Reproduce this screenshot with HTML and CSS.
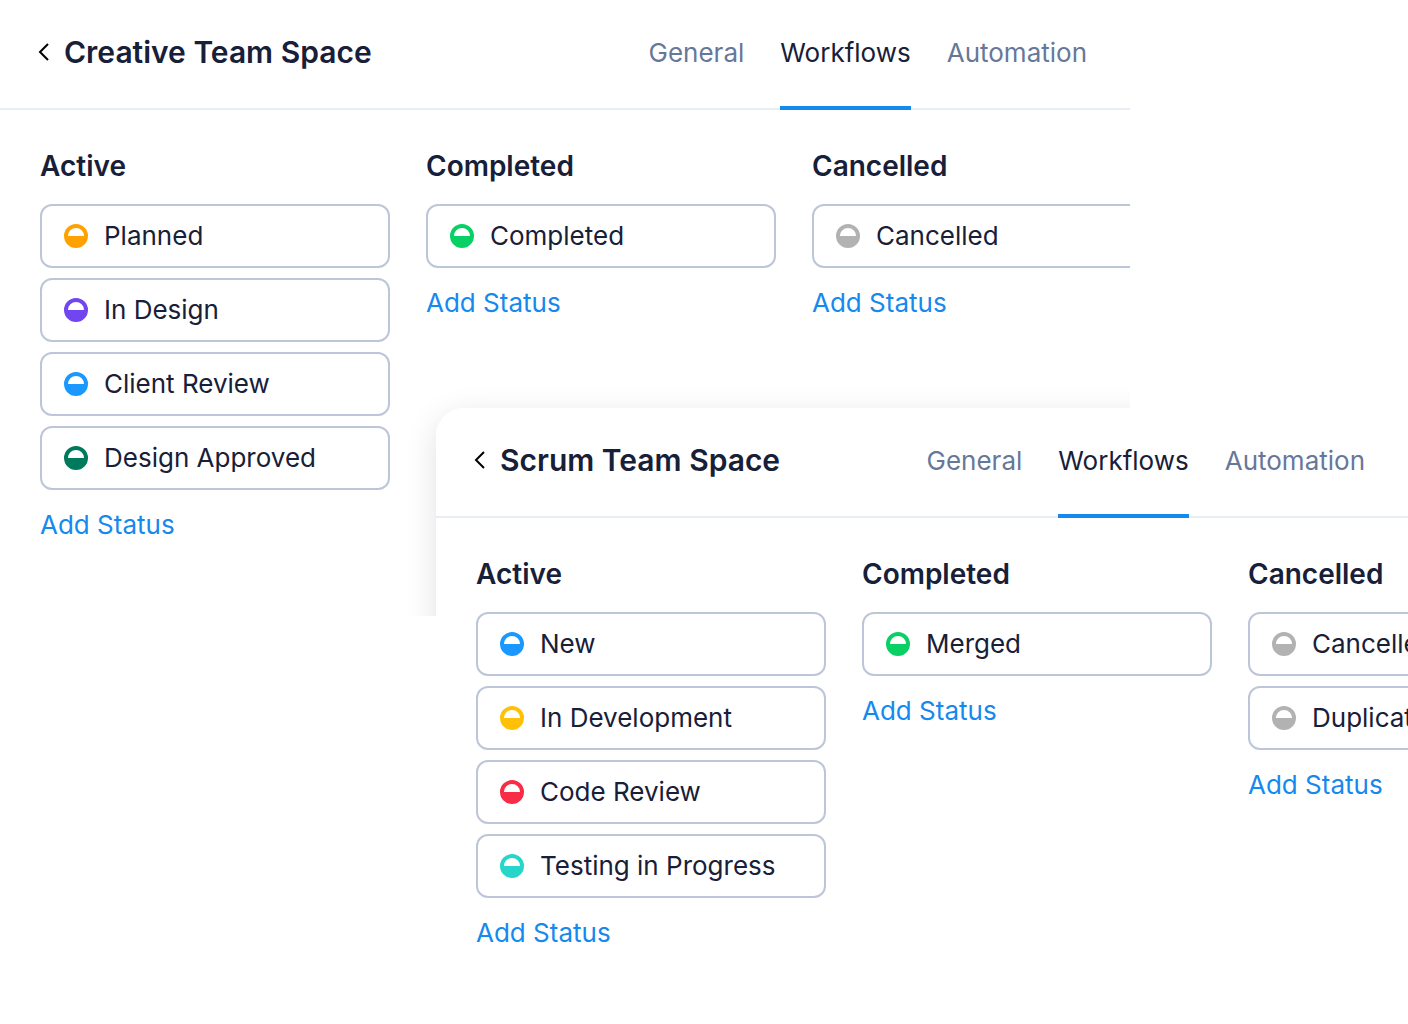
FILE: index.html
```html
<!DOCTYPE html>
<html lang="en">
<head>
  <meta charset="UTF-8">
  <meta name="viewport" content="width=device-width, initial-scale=1.0">
  <title>Team Spaces</title>
  <link rel="stylesheet" href="styles.css">
</head>
<body>
  <main class="stage">
    <section class="panel panel-back">
      <header class="panel-header">
        <div class="panel-title">
          <button class="back" type="button" aria-label="Back">
            <svg width="12" height="20" viewBox="0 0 12 20"><path d="M10 2 L2 10 L10 18"/></svg>
          </button>
          <h1>Creative Team Space</h1>
        </div>
        <nav class="tabs">
          <a href="#general">General</a>
          <a href="#workflows" class="active">Workflows</a>
          <a href="#automation">Automation</a>
        </nav>
      </header>
      <div class="board">
        <div class="column">
          <h2>Active</h2>
          <ul>
            <li><span class="dot orange"></span>Planned</li>
            <li><span class="dot purple"></span>In Design</li>
            <li><span class="dot blue"></span>Client Review</li>
            <li><span class="dot dark-green"></span>Design Approved</li>
          </ul>
          <button class="add" type="button">Add Status</button>
        </div>
        <div class="column">
          <h2>Completed</h2>
          <ul>
            <li><span class="dot green"></span>Completed</li>
          </ul>
          <button class="add" type="button">Add Status</button>
        </div>
        <div class="column">
          <h2>Cancelled</h2>
          <ul>
            <li><span class="dot gray"></span>Cancelled</li>
          </ul>
          <button class="add" type="button">Add Status</button>
        </div>
      </div>
    </section>

    <div class="shadow"></div>

    <section class="panel panel-front">
      <header class="panel-header">
        <div class="panel-title">
          <button class="back" type="button" aria-label="Back">
            <svg width="12" height="20" viewBox="0 0 12 20"><path d="M10 2 L2 10 L10 18"/></svg>
          </button>
          <h1>Scrum Team Space</h1>
        </div>
        <nav class="tabs">
          <a href="#general">General</a>
          <a href="#workflows" class="active">Workflows</a>
          <a href="#automation">Automation</a>
        </nav>
      </header>
      <div class="board">
        <div class="column">
          <h2>Active</h2>
          <ul>
            <li><span class="dot blue"></span>New</li>
            <li><span class="dot yellow"></span>In Development</li>
            <li><span class="dot red"></span>Code Review</li>
            <li><span class="dot teal"></span>Testing in Progress</li>
          </ul>
          <button class="add" type="button">Add Status</button>
        </div>
        <div class="column">
          <h2>Completed</h2>
          <ul>
            <li><span class="dot green"></span>Merged</li>
          </ul>
          <button class="add" type="button">Add Status</button>
        </div>
        <div class="column">
          <h2>Cancelled</h2>
          <ul>
            <li><span class="dot gray"></span>Cancelled</li>
            <li><span class="dot gray"></span>Duplicate</li>
          </ul>
          <button class="add" type="button">Add Status</button>
        </div>
      </div>
    </section>
  </main>
</body>
</html>
```
FILE: styles.css
```css
* {
  box-sizing: border-box;
}

body {
  margin: 0;
  font-family: Inter, "Liberation Sans", sans-serif;
  font-size: 26px;
  line-height: 32px;
  color: #172038;
  background-color: #fff;
}

h1,
h2,
ul {
  margin: 0;
  padding: 0;
}

button {
  border: none;
  padding: 0;
  background: none;
  font: inherit;
  cursor: pointer;
}

/* two panels sharing the middle cell of the grid */
.stage {
  display: grid;
  grid-template-columns: 218fr 347fr 139fr;
  grid-template-rows: 408px 208px 1fr;
  min-height: 100vh;
}

.panel {
  min-width: 0;
  overflow: hidden;
  background-color: #fff;
}

.panel-back {
  grid-area: 1 / 1 / 3 / 3;
}

.panel-front {
  grid-area: 2 / 2 / 4 / 4;
  border-top-left-radius: 28px;
  z-index: 1;
}

/* the shadow falls on the back panel only */
.shadow {
  grid-area: 2 / 2 / 3 / 3;
  position: relative;
  clip-path: inset(-48px 0 0 -48px);
}

.shadow::before {
  content: "";
  position: absolute;
  inset: 0 -80px -80px 0;
  border-top-left-radius: 28px;
  box-shadow: 0 8px 32px rgba(0, 0, 0, 0.12);
}

.panel-header {
  display: flex;
  justify-content: space-between;
  align-items: baseline;
  padding: 36px 43px 0 38px;
  border-bottom: 2px solid #e8edf3;
}

.panel-title {
  display: flex;
  align-items: center;
  gap: 14px;
}

.back {
  display: flex;
}

.back svg {
  fill: none;
  stroke: #000;
  stroke-width: 2;
}

h1 {
  font-size: 30px;
  font-weight: 600;
}

.tabs {
  display: flex;
  gap: 36px;
  margin-bottom: -2px;
}

.tabs a {
  padding-bottom: 37px;
  border-bottom: 4px solid transparent;
  color: #667899;
  text-decoration: none;
}

.tabs .active {
  color: #172038;
  border-bottom-color: #1589ee;
}

.board {
  display: flex;
  gap: 36px;
  padding: 40px;
}

.column {
  flex: 0 0 350px;
}

h2 {
  margin-bottom: 22px;
  font-size: 28px;
  font-weight: 600;
}

.column ul {
  display: grid;
  gap: 10px;
  list-style: none;
}

.column li {
  display: flex;
  align-items: center;
  gap: 16px;
  height: 64px;
  padding: 0 22px;
  border: 2px solid #bdc6d8;
  border-radius: 12px;
}

.dot {
  width: 24px;
  height: 24px;
  border: 4px solid;
  border-radius: 50%;
  background: linear-gradient(#fff 50%, currentColor 50%);
}

.orange {
  color: #ffa200;
}

.purple {
  color: #7145f0;
}

.blue {
  color: #1a98ff;
}

.dark-green {
  color: #007a5c;
}

.green {
  color: #08d065;
}

.gray {
  color: #b2b2b2;
}

.yellow {
  color: #ffc107;
}

.red {
  color: #f92c48;
}

.teal {
  color: #26d7c9;
}

.add {
  margin-top: 19px;
  color: #1589ee;
}
```
